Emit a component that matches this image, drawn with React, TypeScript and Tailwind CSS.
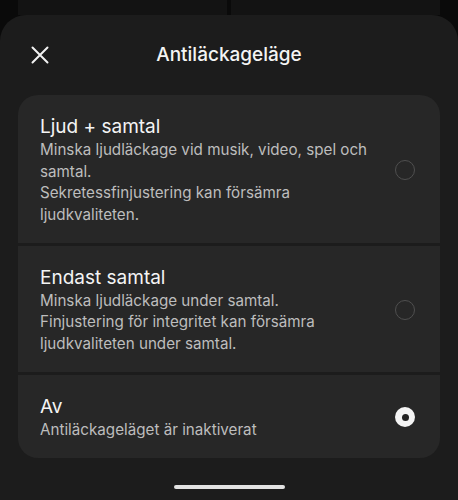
import React from 'react';

type Option = { title: string; lines: string[]; selected?: boolean };

const options: Option[] = [
  {
    title: 'Ljud + samtal',
    lines: ['Minska ljudläckage vid musik, video, spel och samtal.', 'Sekretessfinjustering kan försämra ljudkvaliteten.'],
  },
  {
    title: 'Endast samtal',
    lines: ['Minska ljudläckage under samtal.', 'Finjustering för integritet kan försämra ljudkvaliteten under samtal.'],
  },
  { title: 'Av', lines: ['Antiläckageläget är inaktiverat'], selected: true },
];

function Radio({ checked }: { checked?: boolean }) {
  if (checked) {
    return (
      <span className="flex size-[20px] shrink-0 items-center justify-center rounded-full bg-[#f4f4f4]">
        <span className="size-[7px] rounded-full bg-[#222222]" />
      </span>
    );
  }
  return <span className="size-[20px] shrink-0 rounded-full border-[1.5px] border-[#4f4f4f]" />;
}

export default function App() {
  return (
    <div className="flex h-[500px] w-[458px] flex-col overflow-hidden bg-[#0a0a0a] font-['Inter',sans-serif]">
      <div className="flex h-[15px] shrink-0 gap-[4px] px-[18px]">
        <div className="flex-1 bg-[#131313]" />
        <div className="flex-1 bg-[#131313]" />
      </div>
      <div className="flex flex-1 flex-col rounded-t-[26px] bg-[#1c1c1c]">
        <div className="grid h-[80px] grid-cols-[1fr_auto_1fr] items-center">
          <div className="pl-[31px]">
            <svg width="18" height="18" viewBox="0 0 18 18" fill="none" stroke="#f2f2f2" strokeWidth="2" strokeLinecap="round">
              <path d="M1.5 1.5 16.5 16.5M16.5 1.5 1.5 16.5" />
            </svg>
          </div>
          <h1 className="text-[19px] leading-[24px] font-medium text-[#f4f4f4]">Antiläckageläge</h1>
          <div />
        </div>
        <div className="mx-[18px] flex flex-col gap-[2.5px] overflow-hidden rounded-[20px]">
          {options.map((o) => (
            <div key={o.title} className="flex items-center gap-3 bg-[#272727] pt-[20px] pr-[25px] pb-[18px] pl-[22px]">
              <div className="flex-1">
                <p className="text-[19px] leading-[24px] text-[#f4f4f4]">{o.title}</p>
                {o.lines.map((l) => (
                  <p key={l} className="text-[15.2px] leading-[21.5px] text-[#bdbdbd]">
                    {l}
                  </p>
                ))}
              </div>
              <Radio checked={o.selected} />
            </div>
          ))}
        </div>
        <div className="mx-auto mt-[27px] h-[4px] w-[111px] rounded-full bg-[#e2e2e2]" />
      </div>
    </div>
  );
}
